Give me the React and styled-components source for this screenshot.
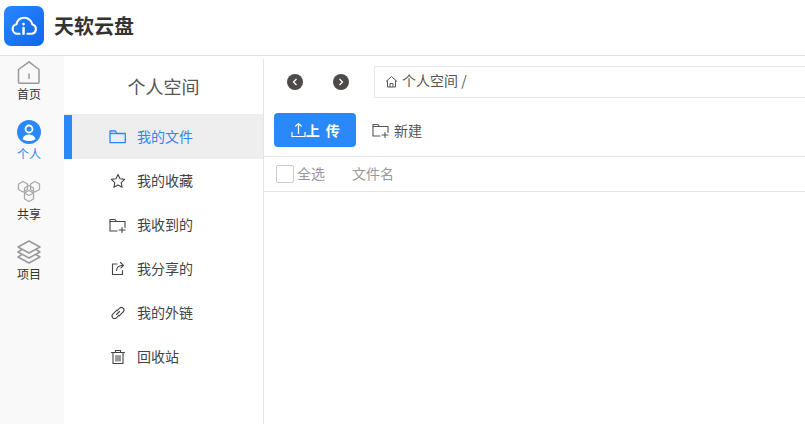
import styled, { createGlobalStyle } from 'styled-components';

const GlobalStyle = createGlobalStyle`
  html, body {
    margin: 0;
    padding: 0;
    background: #fff;
    overflow: hidden;
  }
  * { box-sizing: border-box; }
  body {
    font-family: 'Noto Sans CJK SC', 'Liberation Sans', sans-serif;
  }
`;

const Page = styled.div`
  width: 805px;
  height: 424px;
  display: flex;
  flex-direction: column;
  overflow: hidden;
`;

const Header = styled.header`
  height: 56px;
  flex: none;
  display: flex;
  align-items: center;
  gap: 10px;
  padding: 0 0 3px 4px;
  border-bottom: 1px solid #e2e2e2;
`;

const Logo = styled.div`
  width: 40px;
  height: 40px;
  border-radius: 7px;
  background: linear-gradient(135deg, #2a86ff, #0f66ee);
  display: flex;
  align-items: center;
  justify-content: center;
`;

const Brand = styled.h1`
  margin: 0;
  font-size: 20px;
  line-height: 28px;
  font-weight: 700;
  color: #333;
`;

const Body = styled.div`
  flex: 1;
  display: flex;
  min-height: 0;
`;

const Rail = styled.nav`
  width: 64px;
  flex: none;
  background: #f9f9f9;
  display: flex;
  flex-direction: column;
  padding-top: 4px;
`;

const RailItem = styled.div`
  width: 58px;
  height: 60px;
  display: flex;
  flex-direction: column;
  align-items: center;
  font-size: 12px;
  line-height: 14px;
  gap: 2px;
  color: ${(props) => (props.$active ? '#2a88f8' : '#333')};
`;

const RailIcon = styled.div`
  height: 25px;
  display: flex;
  align-items: flex-start;
  justify-content: center;
`;

const SideMenu = styled.aside`
  width: 200px;
  flex: none;
  margin-top: 3px;
  border-right: 1px solid #e4e4e4;
`;

const SideTitle = styled.div`
  height: 56px;
  padding-bottom: 3px;
  display: flex;
  align-items: center;
  justify-content: center;
  font-size: 18px;
  color: #555;
`;

const MenuItem = styled.div`
  height: 44px;
  display: flex;
  align-items: center;
  gap: 11px;
  padding: 0 0 0 37px;
  font-size: 14px;
  color: ${(props) => (props.$active ? '#2a88f8' : '#444')};
  background: ${(props) => (props.$active ? '#eeeeee' : 'transparent')};
  box-shadow: ${(props) => (props.$active ? '0 -1px 0 #eeeeee' : 'none')};
  border-left: 8px solid ${(props) => (props.$active ? '#2a88f8' : 'transparent')};
`;

const MenuIcon = styled.span`
  width: 17px;
  height: 17px;
  flex: none;
  display: flex;
  align-items: center;
  justify-content: center;
`;

const MenuLabel = styled.span`
  line-height: 20px;
  margin-top: -2px;
`;

const Main = styled.main`
  flex: 1;
  min-width: 0;
`;

const PathBar = styled.div`
  display: flex;
  align-items: center;
  padding: 10px 0 0 23px;
  gap: 25px;
`;

const NavButtons = styled.div`
  display: flex;
  gap: 30px;
`;

const RoundButton = styled.div`
  width: 16px;
  height: 16px;
  border-radius: 50%;
  background: #4f4a4a;
  display: flex;
  align-items: center;
  justify-content: center;
`;

const Crumb = styled.div`
  flex: 1;
  height: 32px;
  display: flex;
  align-items: center;
  gap: 4px;
  padding: 0 0 5px 10px;
  border: 1px solid #e6e6e6;
  border-right: none;
  font-size: 14px;
  color: #555;

  svg {
    margin-top: 3px;
  }
`;

const Toolbar = styled.div`
  height: 59px;
  display: flex;
  align-items: flex-start;
  gap: 16px;
  padding: 15px 0 0 10px;
  border-bottom: 1px solid #e4e4e4;
`;

const UploadButton = styled.button`
  width: 82px;
  height: 34px;
  border: none;
  border-radius: 4px;
  background: #2a88f8;
  color: #fff;
  font: 700 14px 'Noto Sans CJK SC', sans-serif;
  letter-spacing: 1.5px;
  display: flex;
  align-items: center;
  justify-content: center;
  gap: 0;
  padding: 0 0 0 2px;
`;

const NewButton = styled.div`
  height: 34px;
  display: flex;
  align-items: center;
  gap: 5px;
  font-size: 14px;
  color: #555;
`;

const TableHead = styled.div`
  height: 35px;
  display: flex;
  align-items: center;
  padding: 0 0 3px 12px;
  border-bottom: 1px solid #e4e4e4;
  font-size: 14px;
  color: #999;
`;

const CheckBox = styled.span`
  width: 18px;
  height: 18px;
  border: 1px solid #ccc;
  border-radius: 2px;
  margin: 2px 3px 0 0;
`;

const NameColumn = styled.span`
  margin-left: 27px;
`;

const stroke = { fill: 'none', stroke: 'currentColor', strokeWidth: 1.1, strokeLinejoin: 'round', strokeLinecap: 'round' };

const FolderIcon = () => (
  <svg width="17" height="14" viewBox="0 0 17 14" fill="#e8edf5" stroke="currentColor" strokeWidth="1.3" strokeLinejoin="round">
    <path d="M1 12.700V1h5.500l1.500 2.500h8.300v9.200z" />
    <path d="M1 3.500h7" />
  </svg>
);

const StarIcon = () => (
  <svg width="16" height="16" viewBox="0 0 16 16" {...stroke}>
    <path d="M8 1.500l2 4.300 4.600.6-3.400 3.200.9 4.700L8 12l-4.100 2.300.9-4.700L1.400 6.400 6 5.800z" />
  </svg>
);

const FolderPlusIcon = () => (
  <svg width="17" height="15" viewBox="0 0 17 15" {...stroke}>
    <path d="M8 13H1V1.500h5l1.500 2H16v6" />
    <path d="M1 3.500h6.500M10 12h6M13 9.500v5" />
  </svg>
);

const ShareIcon = () => (
  <svg width="16" height="16" viewBox="0 0 16 16" {...stroke}>
    <path d="M7 3H2.500v10.500h10V9.500" />
    <path d="M6.500 9.500c.3-3 2.500-5 6.500-5.200M10.500 1.500 13.500 4.300 11 6.800" />
  </svg>
);

const LinkIcon = () => (
  <svg width="16" height="16" viewBox="0 0 16 16" {...stroke}>
    <path d="M6.800 5.200l-4 4a2.500 2.500 0 0 0 3.600 3.600l2.400-2.400" />
    <path d="M9.200 10.800l4-4a2.500 2.500 0 0 0-3.600-3.600L7.200 5.600" />
    <path d="M6.500 9.500l3-3" />
  </svg>
);

const TrashIcon = () => (
  <svg width="16" height="16" viewBox="0 0 16 16" {...stroke}>
    <path d="M1.500 3.500h13M5.500 3.500V1.500h5v2M3 3.500v11h10v-11M6 6.500v5.500M8 6.500v5.500M10 6.500v5.500" />
  </svg>
);

const menu = [
  { name: '我的文件', icon: <FolderIcon />, active: true },
  { name: '我的收藏', icon: <StarIcon /> },
  { name: '我收到的', icon: <FolderPlusIcon /> },
  { name: '我分享的', icon: <ShareIcon /> },
  { name: '我的外链', icon: <LinkIcon /> },
  { name: '回收站', icon: <TrashIcon /> },
];

const rail = [
  {
    name: '首页',
    icon: (
      <svg width="24" height="25" viewBox="0 0 24 25" fill="none" stroke="#999" strokeWidth="1.500" strokeLinejoin="round">
        <path d="M1.500 9.500 12 1.800l10 7.700v12.700a1 1 0 0 1-1 1H2.500a1 1 0 0 1-1-1z" />
        <path d="M12 13.500v5.500" />
      </svg>
    ),
  },
  {
    name: '个人',
    active: true,
    icon: (
      <svg width="24" height="24" viewBox="0 0 24 24">
        <circle cx="12" cy="12" r="12" fill="#2a88f8" />
        <circle cx="12" cy="9" r="3.500" fill="none" stroke="#fff" strokeWidth="1.800" />
        <path d="M5.500 19c1-3.200 3.500-4.500 6.500-4.500s5.500 1.300 6.500 4.500c-1.600 1.400-4 2-6.500 2s-4.900-.6-6.500-2z" fill="#fff" />
      </svg>
    ),
  },
  {
    name: '共享',
    icon: (
      <svg width="24" height="23" viewBox="0 0 24 23" fill="none" stroke="#aaa" strokeWidth="1.300" strokeLinejoin="round">
        <path d="M6 1.500 10.500 4v5.500L6 12 1.500 9.500V4z" />
        <path d="M18 1.500 22.500 4v5.500L18 12l-4.500-2.500V4z" />
        <path d="M12 5.500 16.500 8v5L12 15.500 7.500 13V8z" />
        <path d="M12 10.500 16.500 13v6L12 21.500 7.500 19v-6z" />
      </svg>
    ),
  },
  {
    name: '项目',
    icon: (
      <svg width="24" height="24" viewBox="0 0 24 24" fill="none" stroke="#999" strokeWidth="1.500" strokeLinejoin="round">
        <path d="M12 1 23 7l-11 6L1 7z" />
        <path d="M5 9.500 1 12l11 6 11-6-4-2.500" />
        <path d="M5 14.500 1 17l11 6 11-6-4-2.500" />
      </svg>
    ),
  },
];

export default function App() {
  return (
    <Page>
      <GlobalStyle />
      <Header>
        <Logo>
          <svg width="27" height="20" viewBox="0 0 28 20" fill="none" stroke="#fff" strokeWidth="2.200" strokeLinecap="round" strokeLinejoin="round">
            <path d="M9 18H6.500a5 5 0 0 1-.8-9.900C6.600 4 9.900 1.500 13.800 1.500c4.200 0 7.700 3 8.300 6.900a4.900 4.900 0 0 1-.6 9.600H17" />
            <path d="M13 12v6" strokeWidth="2.600" />
            <circle cx="13" cy="8" r="1.400" fill="#fff" stroke="none" />
          </svg>
        </Logo>
        <Brand>天软云盘</Brand>
      </Header>
      <Body>
        <Rail>
          {rail.map(({ name, icon, active }) => (
            <RailItem key={name} $active={active}>
              <RailIcon>{icon}</RailIcon>
              {name}
            </RailItem>
          ))}
        </Rail>
        <SideMenu>
          <SideTitle>个人空间</SideTitle>
          {menu.map(({ name, icon, active }) => (
            <MenuItem key={name} $active={active}>
              <MenuIcon>{icon}</MenuIcon>
              <MenuLabel>{name}</MenuLabel>
            </MenuItem>
          ))}
        </SideMenu>
        <Main>
          <PathBar>
            <NavButtons>
              <RoundButton>
                <svg width="10" height="10" viewBox="0 0 10 10" fill="none" stroke="#fff" strokeWidth="1.300">
                  <path d="M6.500 2 3.500 5l3 3" />
                </svg>
              </RoundButton>
              <RoundButton>
                <svg width="10" height="10" viewBox="0 0 10 10" fill="none" stroke="#fff" strokeWidth="1.300">
                  <path d="M3.500 2l3 3-3 3" />
                </svg>
              </RoundButton>
            </NavButtons>
            <Crumb>
              <svg width="13" height="13" viewBox="0 0 13 13" fill="none" stroke="#555" strokeWidth="1">
                <path d="M1 6.500 6.500 1.500 12 6.500M2.500 5.500v6.500h8V5.500M5 12V8.500h3V12" />
              </svg>
              个人空间 /
            </Crumb>
          </PathBar>
          <Toolbar>
            <UploadButton>
              <svg width="15" height="16" viewBox="0 0 15 16" fill="none" stroke="#fff" strokeWidth="1.200">
                <path d="M1 10v4.500h13V10M7.500 12V1.500M4.300 4.500l3.200-3 3.200 3" />
              </svg>
              上 传
            </UploadButton>
            <NewButton>
              <FolderPlusIcon />
              新建
            </NewButton>
          </Toolbar>
          <TableHead>
            <CheckBox />
            全选
            <NameColumn>文件名</NameColumn>
          </TableHead>
        </Main>
      </Body>
    </Page>
  );
}
